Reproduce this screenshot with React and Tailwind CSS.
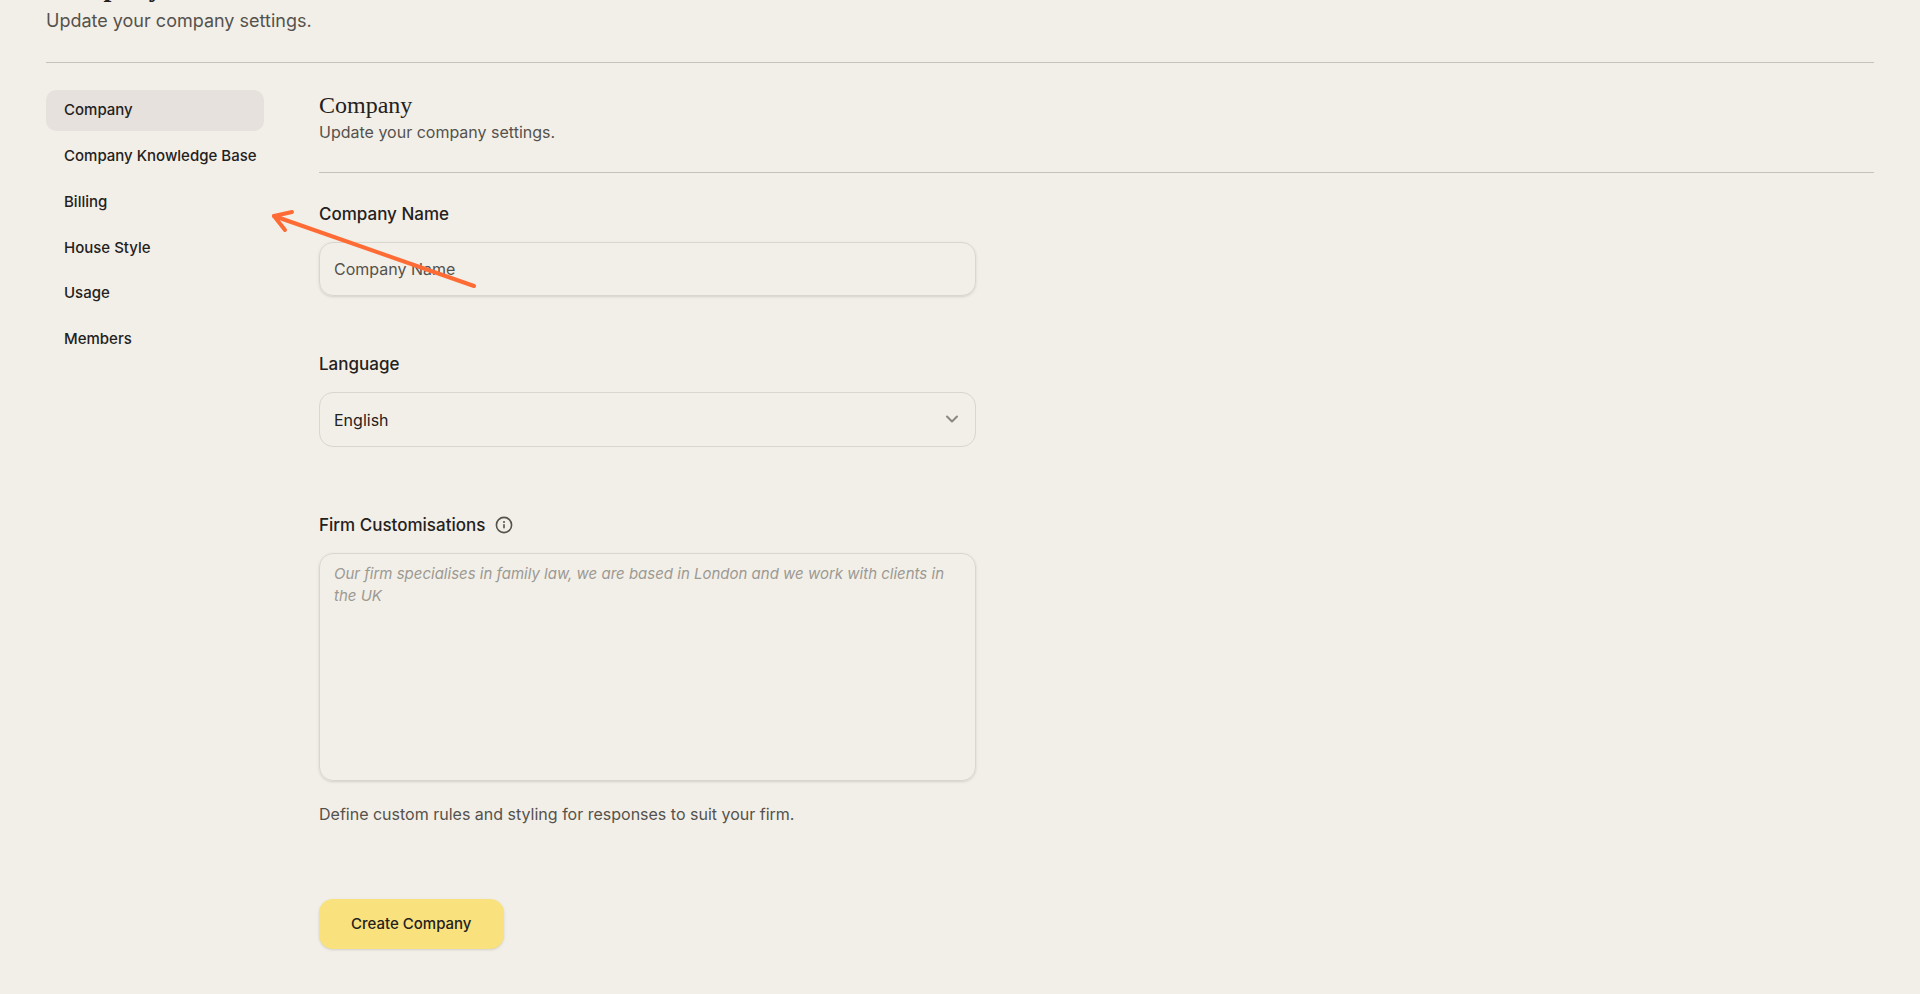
import React from 'react';
import { ChevronDown } from 'lucide-react';

const navItems = ['Company', 'Company Knowledge Base', 'Billing', 'House Style', 'Usage', 'Members'];

const InfoIcon = () => (
  <svg viewBox="0 0 18 18" className="size-[18px]" fill="none" stroke="currentColor" strokeLinecap="round">
    <circle cx="9" cy="9" r="7.6" strokeWidth="1.6" />
    <path d="M9 8.8v3" strokeWidth="1.6" />
    <circle cx="9" cy="6" r="1" fill="currentColor" stroke="none" />
  </svg>
);

const Arrow = () => (
  <svg
    viewBox="0 0 210 82"
    className="pointer-events-none absolute left-[270px] top-[208px] h-[82px] w-[210px]"
    fill="none"
    stroke="#ff6b35"
    strokeWidth="4"
    strokeLinecap="round"
    strokeLinejoin="round"
    aria-hidden="true"
  >
    <path d="M204 78 4 8" />
    <path d="M22 4 4 8l11 14" />
  </svg>
);

const SideNav = () => (
  <nav className="flex h-[270px] w-[218px] shrink-0 flex-col justify-between">
    {navItems.map((item, idx) => (
      <a
        key={item}
        href="#"
        className={`flex h-[41px] items-center whitespace-nowrap rounded-[10px] px-[18px] text-[15px] font-medium ${
          idx === 0 ? 'bg-[#e6e1dc]' : ''
        }`}
      >
        {item}
      </a>
    ))}
  </nav>
);

const CompanyForm = () => (
  <form className="flex max-w-[657px] flex-col pt-[27px]" onSubmit={(e) => e.preventDefault()}>
    <label htmlFor="name" className="text-[17px] leading-7 font-medium">
      Company Name
    </label>
    <input
      id="name"
      type="text"
      placeholder="Company Name"
      className="mt-[14px] h-[54px] rounded-[14px] border border-[#d9d6cf] px-[14px] text-base shadow-sm placeholder:text-[#55524d]"
    />

    <label htmlFor="language" className="mt-[54px] text-[17px] leading-7 font-medium">
      Language
    </label>
    <div className="relative mt-[14px]">
      <select
        id="language"
        className="block h-[55px] w-full appearance-none rounded-[14px] border border-[#d9d6cf] px-[14px] text-base"
      >
        <option>English</option>
      </select>
      <ChevronDown
        size={20}
        strokeWidth={2.4}
        className="pointer-events-none absolute right-[14px] top-[17px] text-[#8b8780]"
      />
    </div>

    <div className="mt-16 flex items-center gap-[10px]">
      <label htmlFor="custom" className="text-[17px] leading-7 font-medium">
        Firm Customisations
      </label>
      <span className="text-[#55524d]">
        <InfoIcon />
      </span>
    </div>
    <textarea
      id="custom"
      placeholder="Our firm specialises in family law, we are based in London and we work with clients in the UK"
      className="mt-[14px] h-[228px] resize-none rounded-[14px] border border-[#d9d6cf] px-[14px] py-[9px] text-[15px] leading-[22px] shadow-sm placeholder:text-[#9c9993] placeholder:italic"
    />
    <p className="mt-[21px] text-base text-[#55524d]">
      Define custom rules and styling for responses to suit your firm.
    </p>

    <button
      type="submit"
      className="mt-[73px] h-[50px] self-start rounded-[14px] bg-[#f9e27d] px-8 text-[15px] font-medium shadow-sm"
    >
      Create Company
    </button>
  </form>
);

const App = () => {
  return (
    <main className="relative min-h-screen overflow-hidden bg-[#f2efe8] px-[46px] pb-[46px] font-['Inter',sans-serif] text-[#24211d]">
      {/* page title is scrolled mostly out of view */}
      <header className="-mt-[34px] border-b border-[#c5c2ba] pb-7">
        <h1 className="font-['Liberation_Serif',serif] text-[28px] leading-[42px] font-bold">Company</h1>
        <p className="text-lg leading-[26px] text-[#55524d]">Update your company settings.</p>
      </header>

      <div className="flex gap-[55px] pt-[27px]">
        <SideNav />
        <section className="min-w-0 flex-1">
          <div className="border-b border-[#c5c2ba] pb-7">
            <h2 className="font-['Liberation_Serif',serif] text-2xl leading-[30px]">Company</h2>
            <p className="text-base leading-6 text-[#55524d]">Update your company settings.</p>
          </div>
          <CompanyForm />
        </section>
      </div>

      <Arrow />
    </main>
  );
};

export default App;
